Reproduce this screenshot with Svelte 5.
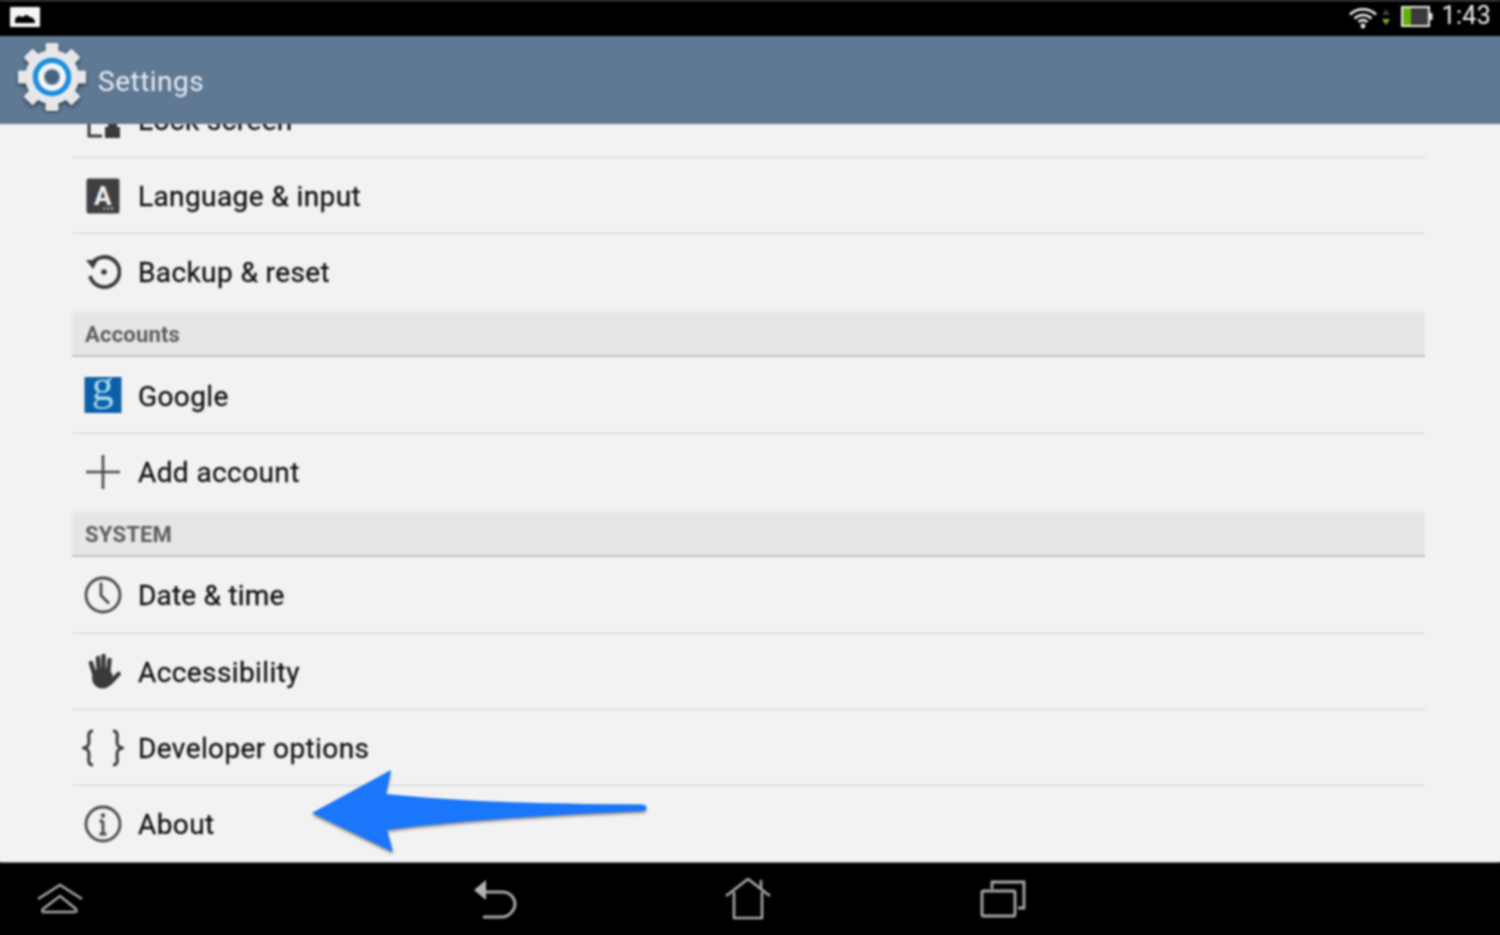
<script>
  const teeth = [0, 45, 90, 135, 180, 225, 270, 315];
</script>

<div class="frame">
  <div class="screen">
    <header class="status">
      <svg class="pic" viewBox="0 0 30 20" width="30" height="20">
        <rect x="0" y="0" width="30" height="20" rx="1" fill="#f6f6f6"/>
        <path d="M5 16v-3c0-2 2-4 4-4s2.500 1 3.500 1 2-2 4-2 2 2 3.500 2c2 0 3 1 4 2.500 1 1 1 2 1 3.500z" fill="#000"/>
      </svg>
      <div class="status-right">
        <svg class="wifi" viewBox="0 0 30 24" width="30" height="24">
          <g fill="none" stroke="#f0f0f0" stroke-width="2.600">
            <path d="M2 9.500c7-7 19-7 26 0"/>
            <path d="M6.500 13.500c5-4.600 12-4.600 17 0"/>
            <path d="M10.500 17c3-2.400 6-2.400 9 0"/>
          </g>
          <circle cx="15" cy="21" r="2.400" fill="#f0f0f0"/>
        </svg>
        <svg class="arrows" viewBox="0 0 10 20" width="10" height="20">
          <path d="M5 2l4 6H1z" fill="#3c443c"/>
          <path d="M1 12h8l-4 6z" fill="#7fb032"/>
        </svg>
        <svg class="battery" viewBox="0 0 32 21" width="32" height="21">
          <rect x="1" y="1" width="27" height="19" fill="#3a3a3a" stroke="#e8e8e0" stroke-width="2"/>
          <rect x="2" y="2" width="8" height="17" fill="#62b012"/>
          <rect x="28" y="7" width="3.500" height="7" fill="#e8e8e0"/>
        </svg>
        <span class="time">1:43</span>
      </div>
    </header>

    <div class="bar">
      <svg class="gear" viewBox="0 0 72 72" width="72" height="72">
        <g class="gear-body">
          {#each teeth as a}
            <rect x="29.500" y="2" width="13" height="14" rx="1.500" fill="#e6e6e8" transform="rotate({a} 36 36)"/>
          {/each}
          <circle cx="36" cy="36" r="27" fill="#e8e8ea"/>
        </g>
        <circle cx="36" cy="36" r="16.500" fill="none" stroke="#1c8fdc" stroke-width="5.500"/>
        <circle cx="36" cy="36" r="13.800" fill="#f2f6f8"/>
        <circle cx="36" cy="36" r="8" fill="#5d7f9c"/>
        <circle cx="36" cy="36" r="6.500" fill="#46627e"/>
      </svg>
      <span class="title">Settings</span>
    </div>

    <main class="content">
      <div class="list">
        <div class="row">
          <svg class="icon" viewBox="0 0 36 36" width="36" height="36">
            <path d="M4 12v22h13" fill="none" stroke="#3a3a3a" stroke-width="3"/>
            <rect x="20" y="25" width="15" height="11" fill="#3a3a3a"/>
            <rect x="23" y="20" width="9" height="6" fill="#3a3a3a"/>
          </svg>
          <span>Lock screen</span>
        </div>
        <div class="row">
          <div class="icon lang"><span>A</span><i></i></div>
          <span>Language &amp; input</span>
        </div>
        <div class="row last">
          <svg class="icon" viewBox="0 0 36 36" width="36" height="36">
            <path d="M6.500 10.500A15 15 0 1 1 5 22" fill="none" stroke="#3a3a3a" stroke-width="3.800"/>
            <path d="M1 6l12 0-5 9z" fill="#3a3a3a"/>
            <circle cx="19" cy="18" r="2.800" fill="#3a3a3a"/>
          </svg>
          <span>Backup &amp; reset</span>
        </div>

        <div class="section">Accounts</div>
        <div class="row head">
          <div class="icon google"><span>g</span></div>
          <span>Google</span>
        </div>
        <div class="row last">
          <svg class="icon" viewBox="0 0 36 36" width="36" height="36">
            <path d="M18 1v34M1 18h34" stroke="#4a4a4a" stroke-width="2.600"/>
          </svg>
          <span>Add account</span>
        </div>

        <div class="section">SYSTEM</div>
        <div class="row head">
          <svg class="icon" viewBox="0 0 38 38" width="38" height="38">
            <circle cx="19" cy="19" r="17" fill="none" stroke="#4a4a4a" stroke-width="2.800"/>
            <path d="M17 6.500v13l8 8" fill="none" stroke="#4a4a4a" stroke-width="2.800"/>
          </svg>
          <span class="tight">Date &amp; time</span>
        </div>
        <div class="row">
          <svg class="icon" viewBox="0 0 36 36" width="36" height="36">
            <g fill="none" stroke="#3a3a3a" stroke-linecap="round" stroke-width="4.500">
              <path d="M6 9l4 13"/>
              <path d="M13 4l1 16"/>
              <path d="M18.500 2v18"/>
              <path d="M24.500 6 23 20"/>
              <path d="M33.500 20 25 29"/>
            </g>
            <ellipse cx="17.500" cy="24" rx="10.500" ry="10.500" fill="#3a3a3a"/>
          </svg>
          <span>Accessibility</span>
        </div>
        <div class="row">
          <svg class="icon" viewBox="0 0 42 38" width="42" height="38">
            <g fill="none" stroke="#3c3c3c" stroke-width="3">
              <path d="M11 2C5 2 7 8 7 13c0 4-2 5-5 6 3 1 5 2 5 6 0 5-2 11 4 11"/>
              <path d="M31 2c6 0 4 6 4 11 0 4 2 5 5 6-3 1-5 2-5 6 0 5 2 11-4 11"/>
            </g>
          </svg>
          <span>Developer options</span>
        </div>
        <div class="row about">
          <svg class="icon" viewBox="0 0 38 38" width="38" height="38">
            <circle cx="19" cy="19" r="17" fill="none" stroke="#4a4a4a" stroke-width="2.800"/>
            <path d="M19 16v13M15.500 16H19M15.500 29h7" fill="none" stroke="#4a4a4a" stroke-width="2.800"/>
            <circle cx="19" cy="10.500" r="2.200" fill="#4a4a4a"/>
          </svg>
          <span>About</span>
        </div>
      </div>

      <svg class="pointer" viewBox="0 0 350 90" width="350" height="90">
        <path d="M2 43 81 0 76 24C140 31 230 34 332 34.500 338 35 338 41 332 41 240 45 150 50 77 60L83 82Z" fill="#1a76fb"/>
      </svg>
    </main>

    <nav class="nav">
      <svg viewBox="0 0 48 32" width="48" height="32">
        <g fill="none" stroke="#a6a6a6" stroke-width="2.400">
          <path d="M2 16 24 2l22 14"/>
          <path d="M7 29h32c2 0 2-2 1-3L24 13 7 26c-1 1-1 3 0 3z"/>
        </g>
      </svg>
      <svg viewBox="0 0 44 42" width="44" height="42">
        <path d="M11 14h17c8 0 13 6 13 12s-6 13-13 13H9" fill="none" stroke="#a6a6a6" stroke-width="3"/>
        <path d="M0 12 12 2v20z" fill="#b4b4b4"/>
      </svg>
      <svg viewBox="0 0 46 42" width="46" height="42">
        <g fill="none" stroke="#a6a6a6" stroke-width="2.600">
          <path d="M1 18 23 1l22 17"/>
          <path d="M9 14v26h28V14"/>
          <path d="M36 2v9"/>
        </g>
      </svg>
      <svg viewBox="0 0 46 38" width="46" height="38">
        <g fill="none" stroke="#a6a6a6" stroke-width="2.800">
          <path d="M12 9V2h32v26h-6"/>
          <rect x="2" y="11" width="33" height="25" rx="1.500"/>
        </g>
      </svg>
    </nav>
  </div>
</div>

<style>
  :global(body) {
    margin: 0;
    background: #000;
    overflow: hidden;
  }

  .frame {
    width: 1500px;
    height: 935px;
    overflow: hidden;
  }

  .screen {
    width: 1500px;
    height: 935px;
    display: flex;
    flex-direction: column;
    font-family: Roboto, "Liberation Sans", sans-serif;
    filter: blur(0.8px);
  }

  .status {
    flex: 0 0 36px;
    box-sizing: border-box;
    background: #000;
    border-top: 1px solid #777;
    display: flex;
    align-items: center;
    justify-content: space-between;
    padding: 0 9px 4px 10px;
  }

  .pic {
    display: block;
  }

  .status-right {
    display: flex;
    align-items: center;
  }

  .wifi {
    margin-right: 3px;
  }

  .arrows {
    margin-right: 10px;
  }

  .time {
    margin-left: 9px;
    margin-bottom: 1px;
    color: #f0f0f0;
    font-size: 25px;
    line-height: 30px;
    letter-spacing: 0.300px;
  }

  .bar {
    flex: 0 0 88px;
    box-sizing: border-box;
    background: #5f7994;
    box-shadow: -6px 0 0 #5f7994, 6px 0 0 #5f7994;
    display: flex;
    align-items: center;
    padding-left: 16px;
  }

  .gear {
    margin-top: -6px;
  }

  .gear-body {
    filter: drop-shadow(0 2px 2px rgba(20, 30, 40, 0.7));
  }

  .title {
    margin-left: 10px;
    margin-top: 3px;
    color: #e8edf2;
    font-size: 28px;
    letter-spacing: 0.500px;
  }

  .content {
    position: relative;
    flex: 1;
    min-height: 0;
    overflow: hidden;
    background: #f2f2f2;
    box-shadow: -6px 0 0 #f2f2f2, 6px 0 0 #f2f2f2;
  }

  .list {
    margin: -42px 75px 0 72px;
  }

  .row {
    height: 75px;
    border-bottom: 1px solid #d0d0d0;
    display: flex;
    align-items: center;
    color: #111;
    font-size: 28px;
    letter-spacing: 0.400px;
    -webkit-text-stroke: 0.3px #111;
    position: relative;
  }

  .row.head {
    height: 76px;
  }

  .row.last {
    border-bottom: 0;
    height: 78px;
    padding-bottom: 3px;
    box-sizing: border-box;
  }

  .row.about {
    border-bottom: 0;
  }

  .icon {
    flex: none;
    display: block;
    position: absolute;
    left: 31px;
    top: 50%;
    transform: translate(-50%, -50%);
  }

  .row.last > .icon {
    top: calc(50% - 1.500px);
  }

  .row > span {
    margin-left: 66px;
    margin-top: 2px;
  }

  .row > span.tight {
    letter-spacing: 0.200px;
    margin-top: 1px;
  }

  .lang {
    width: 33px;
    height: 35px;
    background: #3f3f41;
    border-radius: 2px;
    color: #f0f0f0;
    text-align: center;
    font-weight: 700;
    font-size: 26px;
    line-height: 35px;
    -webkit-text-stroke: 0;
  }

  .lang i {
    position: absolute;
    right: 5px;
    bottom: 4px;
    width: 11px;
    height: 2px;
    background: repeating-linear-gradient(90deg, #ddd 0 2px, transparent 2px 4px);
  }

  .google {
    width: 37px;
    height: 36px;
    background: #0b60a8;
    color: #a9dcf0;
    text-align: center;
    font-family: "Liberation Serif", serif;
    font-size: 44px;
    line-height: 17px;
    -webkit-text-stroke: 0;
  }

  .section {
    height: 43px;
    border-bottom: 2px solid #c4c4c4;
    background: #e6e6e6;
    color: #5c5c5c;
    font-size: 22px;
    font-weight: 700;
    letter-spacing: 0.200px;
    line-height: 45px;
    padding-left: 13px;
  }

  .pointer {
    position: absolute;
    left: 310px;
    top: 646px;
    filter: drop-shadow(0 2px 1.500px rgba(40, 40, 50, 0.55));
  }

  .nav {
    flex: 0 0 73px;
    box-sizing: border-box;
    background: #000;
    border-top: 1px solid #777;
    display: grid;
    grid-template-columns: 438px 251px 255px 1fr;
    align-items: center;
    padding-left: 36px;
  }
</style>
